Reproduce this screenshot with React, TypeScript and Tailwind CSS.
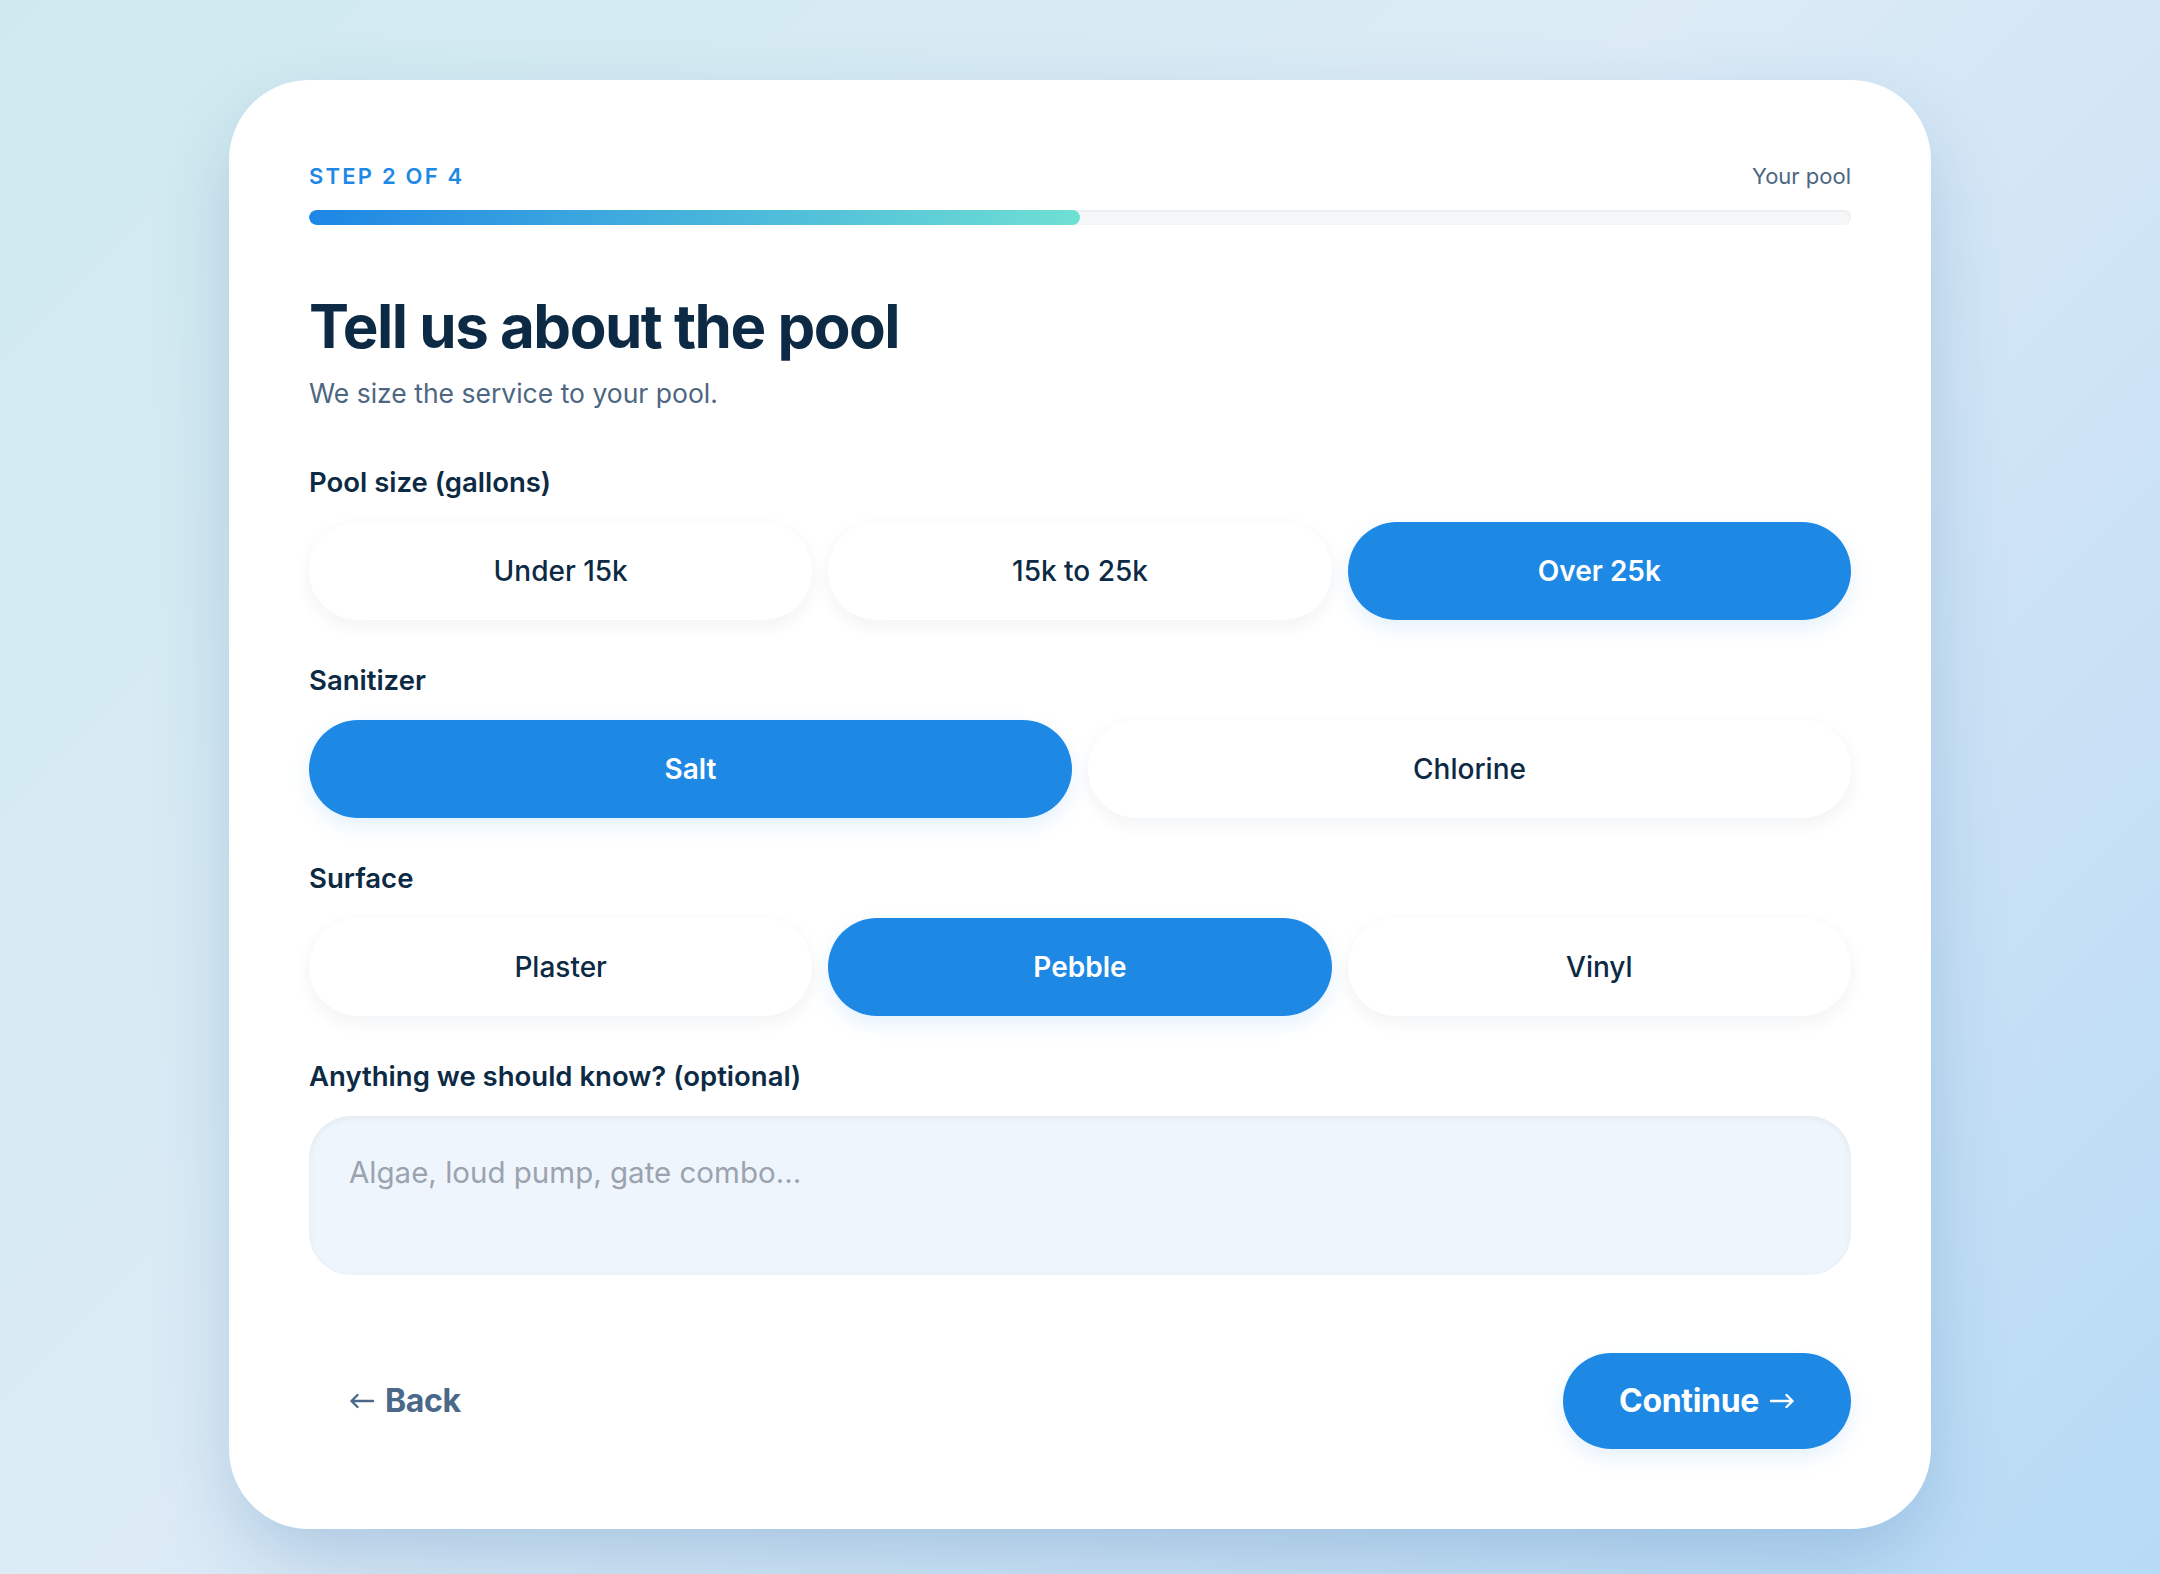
import { useState } from 'react'

const sizes = ['Under 15k', '15k to 25k', 'Over 25k']
const sanitizers = ['Salt', 'Chlorine']
const surfaces = ['Plaster', 'Pebble', 'Vinyl']

function Arrow({ dir }: { dir: 'left' | 'right' }) {
  return (
    <svg
      width="26"
      height="16"
      viewBox="0 0 26 16"
      fill="none"
      stroke="currentColor"
      strokeWidth="2.4"
      strokeLinecap="round"
      strokeLinejoin="round"
      className={dir === 'right' ? 'rotate-180' : ''}
    >
      <path d="M24 8H2.5M8.5 2L2.5 8l6 6" />
    </svg>
  )
}

function OptionGroup({
  label,
  options,
  value,
  onChange,
  cols,
}: {
  label: string
  options: string[]
  value: string
  onChange: (v: string) => void
  cols: string
}) {
  return (
    <div className="mt-[41px] first:mt-[50px]">
      <p className="text-[27.5px] leading-[39px] font-semibold text-[#0d2a45]">{label}</p>
      <div className={`grid ${cols} gap-4 mt-5`}>
        {options.map((opt) => {
          const active = opt === value
          return (
            <button
              key={opt}
              onClick={() => onChange(opt)}
              className={`h-[98px] rounded-full text-[28px] transition-all ${
                active
                  ? 'bg-[#1e88e5] text-white font-semibold shadow-[0_8px_20px_rgba(30,136,229,0.12)]'
                  : 'bg-white text-[#0d2a45] font-medium shadow-[0_6px_18px_rgba(13,42,69,0.06)]'
              }`}
            >
              {opt}
            </button>
          )
        })}
      </div>
    </div>
  )
}

export default function App() {
  const [size, setSize] = useState('Over 25k')
  const [sanitizer, setSanitizer] = useState('Salt')
  const [surface, setSurface] = useState('Pebble')
  const [notes, setNotes] = useState('')

  return (
    <div
      className="min-h-screen pt-[80px] pb-[44px] bg-[linear-gradient(135deg,#cfeaef_0%,#dcebf6_45%,#c9e1f5_75%,#b7daf6_100%)]"
      style={{ fontFamily: 'Inter, "Noto Sans", sans-serif' }}
    >
      <div className="mx-auto w-[1702px] bg-white rounded-[80px] p-[80px] shadow-[0_30px_80px_-10px_rgba(40,100,160,0.28)]">
        {/* step header */}
        <div className="flex items-center justify-between">
          <span className="text-[22px] leading-[33px] font-semibold tracking-[0.1em] text-[#1e88e5]">
            STEP 2 OF 4
          </span>
          <span className="text-[22px] leading-[33px] text-[#4d6682]">Your pool</span>
        </div>
        <div className="mt-[17px] h-[15px] rounded-full bg-[#f4f6f8] shadow-[inset_0_1px_3px_rgba(13,42,69,0.07)] overflow-hidden">
          <div className="h-full w-1/2 rounded-full bg-[linear-gradient(90deg,#1e86e5,#6ee0d3)]" />
        </div>

        <h1 className="mt-[69px] text-[60px] leading-[64px] font-bold tracking-[-0.025em] text-[#0d2a45]">
          Tell us about the pool
        </h1>
        <p className="mt-4 text-[26.5px] leading-[39px] text-[#4d6682]">We size the service to your pool.</p>

        <div className="flex flex-col">
          <OptionGroup label="Pool size (gallons)" options={sizes} value={size} onChange={setSize} cols="grid-cols-3" />
          <OptionGroup label="Sanitizer" options={sanitizers} value={sanitizer} onChange={setSanitizer} cols="grid-cols-2" />
          <OptionGroup label="Surface" options={surfaces} value={surface} onChange={setSurface} cols="grid-cols-3" />
        </div>

        <div className="mt-[41px]">
          <p className="text-[27.5px] leading-[39px] font-semibold text-[#0d2a45]">Anything we should know? (optional)</p>
          <textarea
            value={notes}
            onChange={(e) => setNotes(e.target.value)}
            placeholder="Algae, loud pump, gate combo..."
            className="mt-5 block w-full h-[159px] rounded-[42px] bg-[#eff5fc] px-10 pt-[34px] text-[29.5px] leading-[44px] text-[#0d2a45] placeholder:text-[#9aa3ae] outline-none resize-none shadow-[inset_0_2px_6px_rgba(13,42,69,0.06)]"
          />
        </div>

        <div className="mt-[78px] flex items-center justify-between">
          <button className="h-[96px] px-10 flex items-center gap-[10px] text-[32px] font-bold text-[#4a6887] tracking-[-0.01em]">
            <Arrow dir="left" />
            Back
          </button>
          <button className="h-[96px] px-14 flex items-center gap-[10px] rounded-full bg-[#1e88e5] text-white text-[32px] font-bold tracking-[-0.01em] shadow-[0_8px_20px_rgba(30,136,229,0.12)]">
            Continue
            <Arrow dir="right" />
          </button>
        </div>
      </div>
    </div>
  )
}
